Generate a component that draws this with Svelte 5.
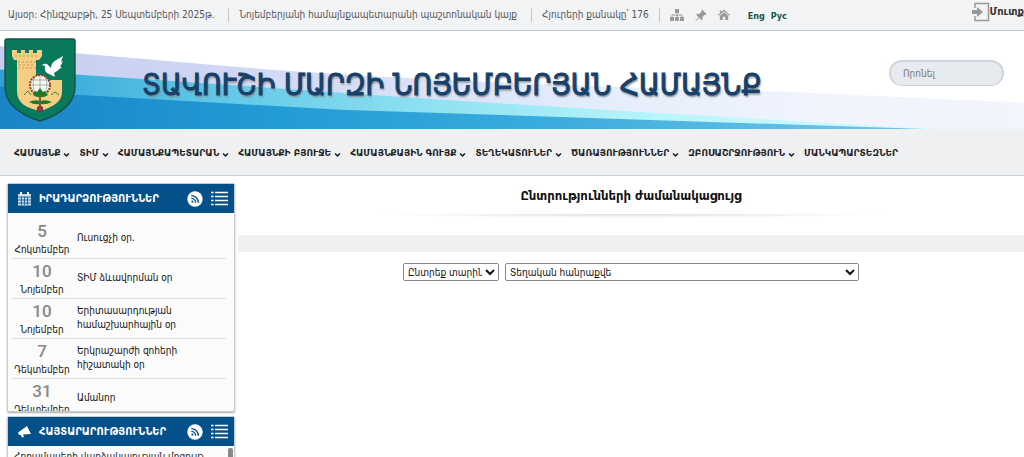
<script>
  const menu = [
    ['ՀԱՄԱՅՆՔ', true],
    ['ՏԻՄ', true],
    ['ՀԱՄԱՅՆՔԱՊԵՏԱՐԱՆ', true],
    ['ՀԱՄԱՅՆՔԻ ԲՅՈՒՋԵ', true],
    ['ՀԱՄԱՅՆՔԱՅԻՆ ԳՈՒՅՔ', true],
    ['ՏԵՂԵԿԱՏՈՒՆԵՐ', true],
    ['ԾԱՌԱՅՈՒԹՅՈՒՆՆԵՐ', true],
    ['ԶԲՈՍԱՇՐՋՈՒԹՅՈՒՆ', true],
    ['ՄԱՆԿԱՊԱՐՏԵԶՆԵՐ', false]
  ];
  const events = [
    ['5', 'Հոկտեմբեր', 'Ուսուցչի օր.'],
    ['10', 'Նոյեմբեր', 'ՏԻՄ ձևավորման օր'],
    ['10', 'Նոյեմբեր', 'Երիտասարդության համաշխարհային օր'],
    ['7', 'Դեկտեմբեր', 'Երկրաշարժի զոհերի հիշատակի օր'],
    ['31', 'Դեկտեմբեր', 'Ամանոր']
  ];
</script>

{#snippet panelTools()}
  <a class="tool" href="#rss" aria-label="RSS">
    <svg width="16" height="16" viewBox="0 0 16 16"><circle cx="8" cy="8" r="7.7" fill="#fff" /><circle cx="5.4" cy="10.6" r="1.1" fill="#04508a" /><path d="M4.3 7.4a4.3 4.3 0 0 1 4.3 4.3M4.3 4.6a7.1 7.1 0 0 1 7.1 7.1" fill="none" stroke="#04508a" stroke-width="1.4" /></svg>
  </a>
  <a class="tool" href="#list" aria-label="Ցանկ">
    <svg width="17" height="15" viewBox="0 0 17 15"><path d="M0 1.5h2.6M0 5.5h2.6M0 9.5h2.6M0 13.5h2.6M4 1.5h13M4 5.5h13M4 9.5h13M4 13.5h13" stroke="#fff" stroke-width="1.7" /></svg>
  </a>
{/snippet}

<div class="page">
  <div class="topbar">
    <span class="info">Այսօր: Հինգշաբթի, 25 Սեպտեմբերի 2025թ.</span>
    <span class="info">Նոյեմբերյանի համայնքապետարանի պաշտոնական կայք</span>
    <span class="info">Հյուրերի քանակը՝ 176</span>
    <div class="quick">
      <a href="#map" aria-label="Կայքի քարտեզ"><svg width="14" height="13" viewBox="0 0 14 13" fill="#999"><path d="M5 0h4v4H5zM0 8h4v4H0zM5 8h4v4H5zM10 8h4v4h-4z" /><path d="M7 4v4M2 8V6h10v2" fill="none" stroke="#999" /></svg></a>
      <a href="#pin" aria-label="Ամրացնել"><svg width="12" height="13" viewBox="0 0 12 13" fill="#999"><path d="M7.2.6 11.5 5l-1 .9-.8-.2-2.2 2.4.1 2.1-1 1-2.4-2.4L.8 12.2l-.4-.4 3.2-3.5L1.1 5.7l1-1 2.2.2 2.3-2.3-.2-1z" /></svg></a>
      <a href="#home" aria-label="Գլխավոր"><svg width="12" height="12" viewBox="0 0 13 12" fill="#999"><path d="M6.5 0 13 6l-.8.9L6.5 1.9.8 6.9 0 6l2-1.9V1h1.7v1.5z" /><path d="M2 6.9 6.5 3 11 6.9V11.5H7.8V8H5.2v3.5H2z" /></svg></a>
    </div>
    <div class="langs"><a href="#en">Eng</a><a href="#ru">Рус</a></div>
    <a class="login" href="#login"><svg width="18" height="20" viewBox="0 0 18 20"><path d="M3 6V1.5h13.5v17H3V14" fill="none" stroke="#999" stroke-width="1.5" /><path d="M0 8h5V5l6 5-6 5v-3H0z" fill="#999" /></svg>Մուտք</a>
  </div>

  <header class="banner">
    <svg class="waves" viewBox="0 0 1024 97" preserveAspectRatio="none" aria-hidden="true">
      <defs>
        <linearGradient id="w1"><stop offset="0" stop-color="#c6cdf0" /><stop offset=".3" stop-color="#d3dbf6" /><stop offset=".6" stop-color="#e5eefb" /><stop offset=".8" stop-color="#f1f4fd" /><stop offset="1" stop-color="#f3f5fd" /></linearGradient>
        <linearGradient id="w2"><stop offset="0" stop-color="#2fa0d6" /><stop offset=".2" stop-color="#5ac4e6" /><stop offset=".45" stop-color="#8ee0f2" /><stop offset=".7" stop-color="#b8f5fc" /><stop offset="1" stop-color="#d8fbff" /></linearGradient>
        <linearGradient id="w3"><stop offset="0" stop-color="#1a85c6" /><stop offset=".3" stop-color="#239bd5" /><stop offset=".6" stop-color="#3bacdd" /><stop offset=".9" stop-color="#68c1e7" /></linearGradient>
      </defs>
      <path d="M0 15 76 22 267 38Q500 54 780 60L1024 71V97H0z" fill="url(#w1)" />
      <path d="M0 38 76 43 340 61Q600 79 940 97H0z" fill="url(#w2)" />
      <path d="M0 55 76 63 340 78 680 89 925 97H0z" fill="url(#w3)" />
    </svg>
    <svg class="crest" width="72" height="84" viewBox="0 0 72 84" role="img" aria-label="Զինանշան">
      <path d="M1 3q0-2 2-2h66q2 0 2 2v45q0 13-9 21-11 10-26 14Q21 79 10 69 1 61 1 48z" fill="#08795b" stroke="#174d49" stroke-width="1.4" />
      <path d="M8 12h5v3h4v-3h4v3h4v-3h4v3h4v-3h5v6l-3 4h-3v20h26v12c0 9-8 15-22 19-14-3-23-8-23-20V22h-3l-2-4z" fill="#f4cf83" />
      <path d="M11 18h24M14 24h18M15 27h16M14 30h18" stroke="#d08a5a" stroke-dasharray="2 2" />
      <circle cx="36" cy="47" r="10" fill="#f7f7ef" stroke="#8d3d2b" stroke-width="2" stroke-dasharray="2 1" />
      <path d="M27 47h18M28 42h16M36 38v19M31 39q-4 8 0 16M41 39q4 8 0 16" fill="none" stroke="#879b92" stroke-width=".7" />
      <path d="m29 57 2-4 2 1 3-4 3 4 2-1 3 4-4 2h-7zM25 64q6-3 11-1 6-2 12 1-6 3-12 2-6 1-11-2z" fill="#1e7a2b" />
      <path d="m20 57 4-4 3 4M47 57l4-3 4 3" fill="none" stroke="#368354" />
      <path d="M35 57h2v11h-2z" fill="#7d5a27" /><circle cx="36" cy="71" r="2.8" fill="#b02d37" stroke="#554444" />
      <path d="M38 27q3-2 5-1l4 4q0-6 7-9l5-3-2 6 2-1-3 6 2 0-5 4-3 2 1 4-4-2-4-2q-3-2-2-7z" fill="#fff" />
    </svg>
    <h1>ՏԱՎՈՒՇԻ ՄԱՐԶԻ ՆՈՅԵՄԲԵՐՅԱՆ ՀԱՄԱՅՆՔ</h1>
    <input class="search" type="search" placeholder="Որոնել" aria-label="Որոնել" />
  </header>

  <nav>
    {#each menu as [label, more]}
      <a href="#menu">{label}{#if more}<svg width="7" height="9" viewBox="0 0 7 9"><path d="m1 4.5 2.5 2.4L6 4.5" fill="none" stroke="#222" stroke-width="1.5" /></svg>{/if}</a>
    {/each}
  </nav>

  <div class="columns">
    <aside>
      <section class="panel">
        <div class="head">
          <svg width="13" height="14" viewBox="0 0 13 14"><path d="M0 2h13v11.5H0z" fill="#c9dceb" /><path d="M0 5h13M0 8h13M0 11h13M3.5 5v8M6.5 5v8M9.5 5v8" stroke="#04508a" stroke-width=".8" /><path d="M3 0v3.5M10 0v3.5" stroke="#fff" stroke-width="2" /></svg>
          <h2>ԻՐԱԴԱՐՁՈՒԹՅՈՒՆՆԵՐ</h2>
          {@render panelTools()}
        </div>
        <ul class="events">
          {#each events as [day, month, title]}
            <li><div class="date"><b>{day}</b><span>{month}</span></div><a href="#event">{title}</a></li>
          {/each}
        </ul>
      </section>
      <section class="panel">
        <div class="head">
          <svg width="13" height="12" viewBox="0 0 13 12"><path d="M9 0 13 8 5 8.6 6 11 4 11.5 2.7 8.9 1 9 0 6.5z" fill="#fff" /></svg>
          <h2>ՀԱՅՏԱՐԱՐՈՒԹՅՈՒՆՆԵՐ</h2>
          {@render panelTools()}
        </div>
        <div class="notices"><a href="#notice">Հողամասերի վարձակալության մրցույթ</a><span class="thumb"></span></div>
      </section>
    </aside>
    <main>
      <h2>Ընտրությունների ժամանակացույց</h2>
      <div class="rule"></div>
      <div class="band"></div>
      <form>
        <select class="year" aria-label="Տարի"><option>Ընտրեք տարին</option></select>
        <select class="kind" aria-label="Տեսակ"><option>Տեղական հանրաքվե</option></select>
      </form>
    </main>
  </div>
</div>

<style>
  :global(body) { margin: 0; background: #fff; }
  .page { height: 100vh; overflow: hidden; font: 10px/14px "DejaVu Sans Condensed", "DejaVu Sans", sans-serif; color: #222; }
  a { color: inherit; text-decoration: none; }
  svg { display: block; flex: none; }
  h1, h2, ul { margin: 0; padding: 0; }
  .topbar { display: flex; align-items: center; height: 30px; padding-left: 8px; background: #f2f3f5; border-bottom: 1px solid #b9c5ce; color: #555; white-space: nowrap; }
  .info { padding-right: 14px; margin-right: 10px; border-right: 1px solid #c4c4c4; }
  .info:nth-child(3) { padding-right: 10px; }
  .quick { display: flex; align-items: center; gap: 11px; }
  .langs { display: flex; gap: 6px; margin: 2px 0 0 18px; font-size: 9px; font-weight: bold; color: #125748; }
  .login { display: flex; align-items: center; margin: 0 0 6px auto; color: #333; font-size: 11px; font-weight: bold; }
  .banner { position: relative; display: flex; align-items: center; height: 98px; padding: 0 20px 0 4px; box-sizing: border-box; }
  .waves { position: absolute; inset: 0; width: 100%; height: 100%; }
  .crest, h1, .search { position: relative; }
  h1 { margin-left: 66px; padding-top: 10px; font-size: 30px; font-weight: normal; line-height: 32px; color: #17416b; -webkit-text-stroke: 1px #17416b; text-shadow: 1px 2px 2px #888; white-space: nowrap; }
  .search { width: 115px; height: 26px; box-sizing: border-box; margin: 0 0 14px auto; padding: 0 12px; border: 2px solid #cfd4d9; border-bottom-width: 1px; border-radius: 13px; background: #e7eaee; font: inherit; }
  .search::placeholder { color: #777; }
  nav { display: flex; gap: 9px; height: 44px; padding: 2px 0 0 14px; background: #eff0f2; border-bottom: 1px solid #c9ccd0; align-items: center; font-family: "DejaVu Sans", sans-serif; font-size: 9px; font-weight: bold; white-space: nowrap; }
  nav a { display: flex; align-items: center; gap: 3px; }
  .columns { display: grid; grid-template-columns: 238px 1fr; }
  aside { display: flex; flex-direction: column; gap: 4px; padding: 7px 3px 0 7px; }
  .panel { border: 1px solid #c7cbd0; box-shadow: 0 1px 2px #aaa; border-radius: 2px; background: #fbfbfb; }
  .head { display: flex; align-items: center; height: 29px; padding: 0 6px 0 10px; gap: 8px; background: #04508a; color: #fff; }
  .head h2 { flex: 1; font-size: 11px; line-height: 14px; white-space: nowrap; }
  .events { height: 198px; box-sizing: border-box; overflow: hidden; list-style: none; padding: 6px 8px 0 4px; color: #111; }
  li { display: grid; grid-template-columns: 60px 1fr; grid-template-rows: 38px; height: 40px; box-sizing: border-box; border-bottom: 1px solid #ddd; align-items: center; gap: 5px; }
  .date { display: flex; flex-direction: column; align-items: center; padding-top: 5px; }
  .date b { font: 500 17px/18px Roboto, sans-serif; color: #888; }
  .date span { line-height: 20px; }
  .notices { position: relative; height: 80px; padding: 4px 6px; white-space: nowrap; overflow: hidden; }
  .thumb { position: absolute; right: 1px; top: 2px; width: 5px; height: 40px; border-radius: 2px; background: #888; }
  main { text-align: center; }
  main h2 { padding-top: 11px; font-size: 13px; line-height: 18px; color: #111; }
  .rule { height: 4px; margin: 9px auto 0; width: 66%; background: radial-gradient(ellipse at top, #ddd, #fff 70%); }
  .band { height: 17px; margin-top: 17px; background: #eff0f2; }
  form { display: flex; justify-content: center; gap: 6px; padding-top: 11px; }
  select { height: 18px; padding: 0; border: 1px solid #888; border-radius: 2px; background: #fff; color: #111; font: inherit; }
  .year { width: 96px; }
  .kind { width: 354px; }
</style>
